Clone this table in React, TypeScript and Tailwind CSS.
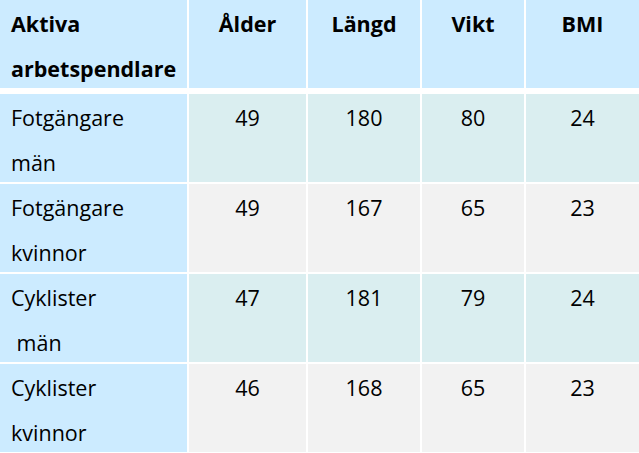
import React from "react";

const rows = [
  { name: ["Fotgängare", "män"], vals: ["49", "180", "80", "24"], odd: true },
  { name: ["Fotgängare", "kvinnor"], vals: ["49", "167", "65", "23"], odd: false },
  { name: ["Cyklister", "\u00a0män"], vals: ["47", "181", "79", "24"], odd: true },
  { name: ["Cyklister", "kvinnor"], vals: ["46", "168", "65", "23"], odd: false },
];

const cols = "grid grid-cols-[187px_117px_112px_102px_1fr] grid-rows-[88px] gap-x-[2px]";

export default function App() {
  return (
    <div
      className="w-[639px] h-[453px] overflow-hidden bg-white text-black text-[21.5px] leading-[45px]"
      style={{ fontFamily: '"Open Sans", "Noto Sans", sans-serif' }}
    >
      <div className="flex flex-col">
        <div className={`${cols} mb-[6px] font-bold`}>
          <div className="bg-[#ccebff] pl-[11px] pt-[1px] overflow-hidden">
            <div>Aktiva</div>
            <div>arbetspendlare</div>
          </div>
          {["Ålder", "Längd", "Vikt", "BMI"].map((h) => (
            <div key={h} className="bg-[#ccebff] text-center pt-[1px] overflow-hidden">
              {h}
            </div>
          ))}
        </div>
        <div className="flex flex-col gap-y-[2px]">
          {rows.map((r, i) => (
            <div key={i} className={cols}>
              <div className="bg-[#ccebff] pl-[11px] pt-[1px] overflow-hidden">
                <div>{r.name[0]}</div>
                <div>{r.name[1]}</div>
              </div>
              {r.vals.map((v, j) => (
                <div
                  key={j}
                  className={`${r.odd ? "bg-[#daeef0]" : "bg-[#f2f2f2]"} text-center pt-[1px] overflow-hidden`}
                >
                  {v}
                </div>
              ))}
            </div>
          ))}
        </div>
      </div>
    </div>
  );
}
